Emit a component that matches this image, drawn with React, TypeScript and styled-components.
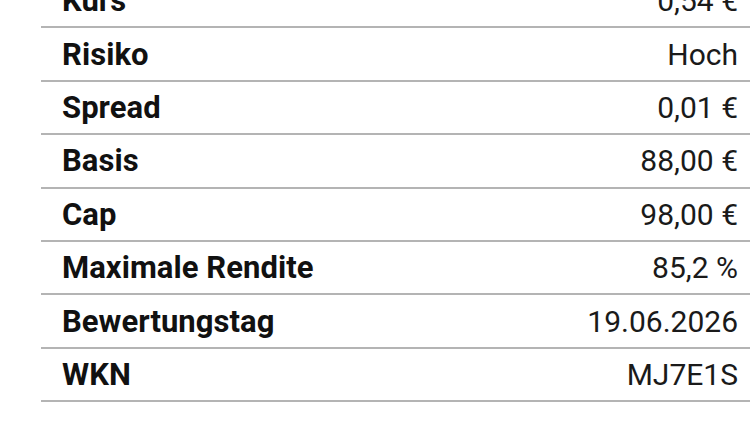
import React from "react";
import styled, { createGlobalStyle } from "styled-components";

const Global = createGlobalStyle`
  html, body { margin: 0; padding: 0; background: #ffffff; overflow: hidden; }
  body { font-family: Roboto, "Liberation Sans", sans-serif; color: #111111; }
`;

const Table = styled.div`
  margin-top: -25px;
  margin-left: 41px;
  display: flex;
  flex-direction: column;
`;

const Row = styled.div`
  height: 53.4px;
  box-sizing: border-box;
  display: flex;
  align-items: center;
  justify-content: space-between;
  padding: 0 12px 0 21px;
  border-bottom: 2px solid #b4b4b4;
`;

const Label = styled.span`
  font-weight: 700;
  font-size: 31px;
  letter-spacing: 0.05px;
  color: #111111;
`;

const Value = styled.span`
  font-weight: 400;
  font-size: 30px;
  color: #1a1a1a;
`;

const rows: [string, string][] = [
  ["Kurs", "0,54 €"],
  ["Risiko", "Hoch"],
  ["Spread", "0,01 €"],
  ["Basis", "88,00 €"],
  ["Cap", "98,00 €"],
  ["Maximale Rendite", "85,2 %"],
  ["Bewertungstag", "19.06.2026"],
  ["WKN", "MJ7E1S"],
];

export default function App() {
  return (
    <>
      <Global />
      <Table>
        {rows.map(([l, v]) => (
          <Row key={l}>
            <Label>{l}</Label>
            <Value>{v}</Value>
          </Row>
        ))}
      </Table>
    </>
  );
}
